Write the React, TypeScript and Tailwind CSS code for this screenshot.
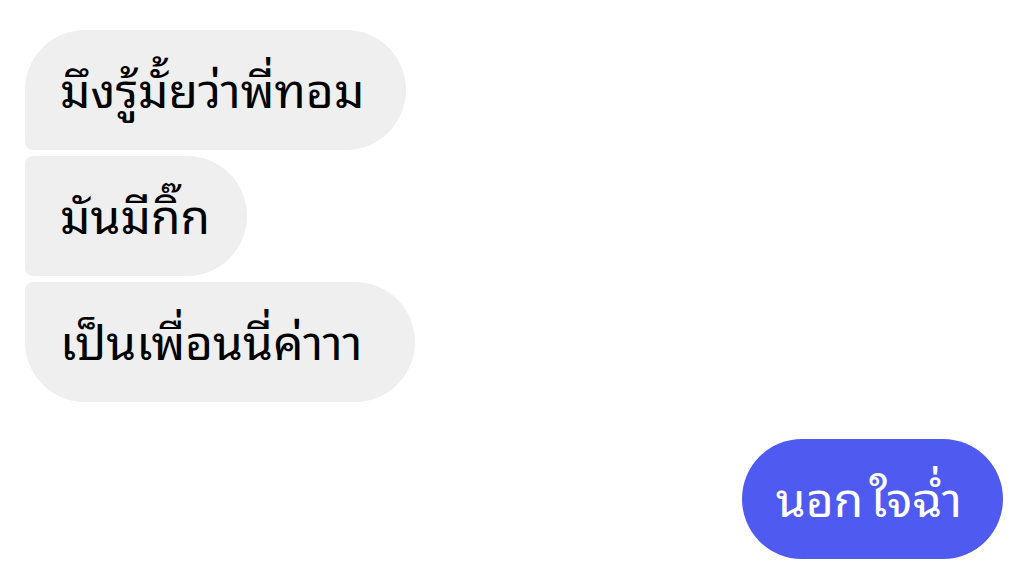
export default function App() {
  const font = { fontFamily: '"Noto Sans Thai Looped", "Noto Sans Thai", "Thonburi", "Tahoma", "DejaVu Sans", "Noto Sans", sans-serif' };
  return (
    <div className="w-[1026px] h-[569px] bg-white overflow-hidden" style={font}>
      <div className="flex flex-col items-start gap-[6px] pl-[25px] pr-[23px] pt-[30px]">
        <div className="h-[120px] flex items-center pb-[6px] pl-[35px] pr-[42px] bg-[#efefef] text-black text-[48px] rounded-tl-[60px] rounded-bl-[8px] rounded-r-[60px]">
          มึงรู้มั้ยว่าพี่ทอม
        </div>
        <div className="h-[120px] flex items-center pb-[6px] pl-[35px] pr-[37px] bg-[#efefef] text-black text-[48px] rounded-l-[8px] rounded-r-[60px]">
          มันมีกิ๊ก
        </div>
        <div className="h-[120px] flex items-center pb-[6px] pl-[35px] pr-[53px] bg-[#efefef] text-black text-[48px] rounded-tl-[8px] rounded-bl-[60px] rounded-r-[60px]">
          เป็นเพื่อนนี่ค่าาา
        </div>
        <div className="self-end mt-[31px] h-[120px] flex items-center gap-[6px] pb-[6px] pl-[34px] pr-[41px] bg-[#4e5af0] text-white text-[48px] rounded-[60px]">
          <span>นอก</span>
          <span>ใจฉ่ำ</span>
        </div>
      </div>
    </div>
  );
}
